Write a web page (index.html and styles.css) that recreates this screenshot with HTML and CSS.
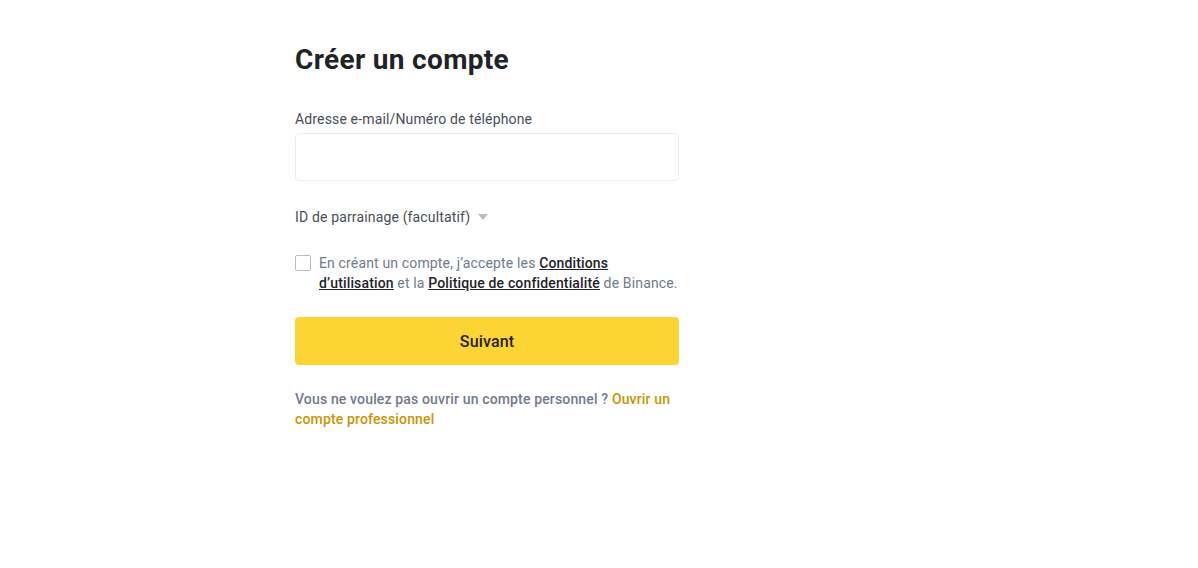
FILE: index.html
```html
<!DOCTYPE html>
<html lang="fr">
<head>
<meta charset="utf-8">
<title>Créer un compte</title>
<link rel="stylesheet" href="styles.css">
</head>
<body>
<main class="page">
  <form class="card">
    <h1 class="title">Créer un compte</h1>
    <div class="field">
      <label class="label" for="email">Adresse e-mail/Numéro de téléphone</label>
      <input class="input" id="email" type="text">
    </div>
    <div class="referral">
      <span>ID de parrainage (facultatif)</span>
      <svg class="caret" width="10" height="6" viewBox="0 0 10 6"><path d="M0 0h10L5 6z" fill="#B7BDC6"/></svg>
    </div>
    <div class="terms">
      <span class="checkbox"></span>
      <p class="terms-text">En créant un compte, j’accepte les <a href="#" class="link">Conditions d’utilisation</a> et la <a href="#" class="link">Politique de confidentialité</a> de Binance.</p>
    </div>
    <button class="btn" type="button">Suivant</button>
    <p class="footer">Vous ne voulez pas ouvrir un compte personnel ? <a href="#" class="pro">Ouvrir un compte professionnel</a></p>
  </form>
</main>
</body>
</html>
```
FILE: styles.css
```css
* { box-sizing: border-box; }
html, body { margin: 0; padding: 0; background: #fff; }
body { font-family: Roboto, "Noto Sans", sans-serif; color: #1E2329; letter-spacing: 0.15px; }
.page { display: flex; justify-content: flex-start; padding-left: 295px; padding-top: 40px; }
.card { width: 384px; display: flex; flex-direction: column; }
.title { margin: 0; font-size: 28px; font-weight: 700; line-height: 40px; letter-spacing: 0.33px; color: #1E2329; }
.field { margin-top: 29px; display: flex; flex-direction: column; }
.label { font-size: 14px; line-height: 20px; color: #474D57; margin-bottom: 4px; }
.input { height: 48px; border: 1px solid #EAECEF; border-radius: 4px; outline: none; }
.referral { margin-top: 25px; display: flex; align-items: center; gap: 8px; font-size: 14px; line-height: 22px; color: #474D57; }
.terms { margin-top: 25px; display: flex; gap: 8px; align-items: flex-start; }
.checkbox { flex: none; width: 16px; height: 16px; border: 1px solid #B7BDC6; border-radius: 2px; margin-top: 2px; }
.terms-text { margin: 0; font-size: 14px; line-height: 20px; color: #707A8A; }
.link { color: #1E2329; font-weight: 500; text-decoration: underline; }
.btn { margin-top: 24px; height: 48px; border: none; border-radius: 4px; background: #FCD535; font-family: inherit; font-size: 16px; font-weight: 500; letter-spacing: 0.15px; color: #1E2329; }
.footer { margin: 24px 0 0; font-size: 14px; line-height: 20px; font-weight: 500; color: #707A8A; }
.pro { color: #C99400; text-decoration: none; }
```
